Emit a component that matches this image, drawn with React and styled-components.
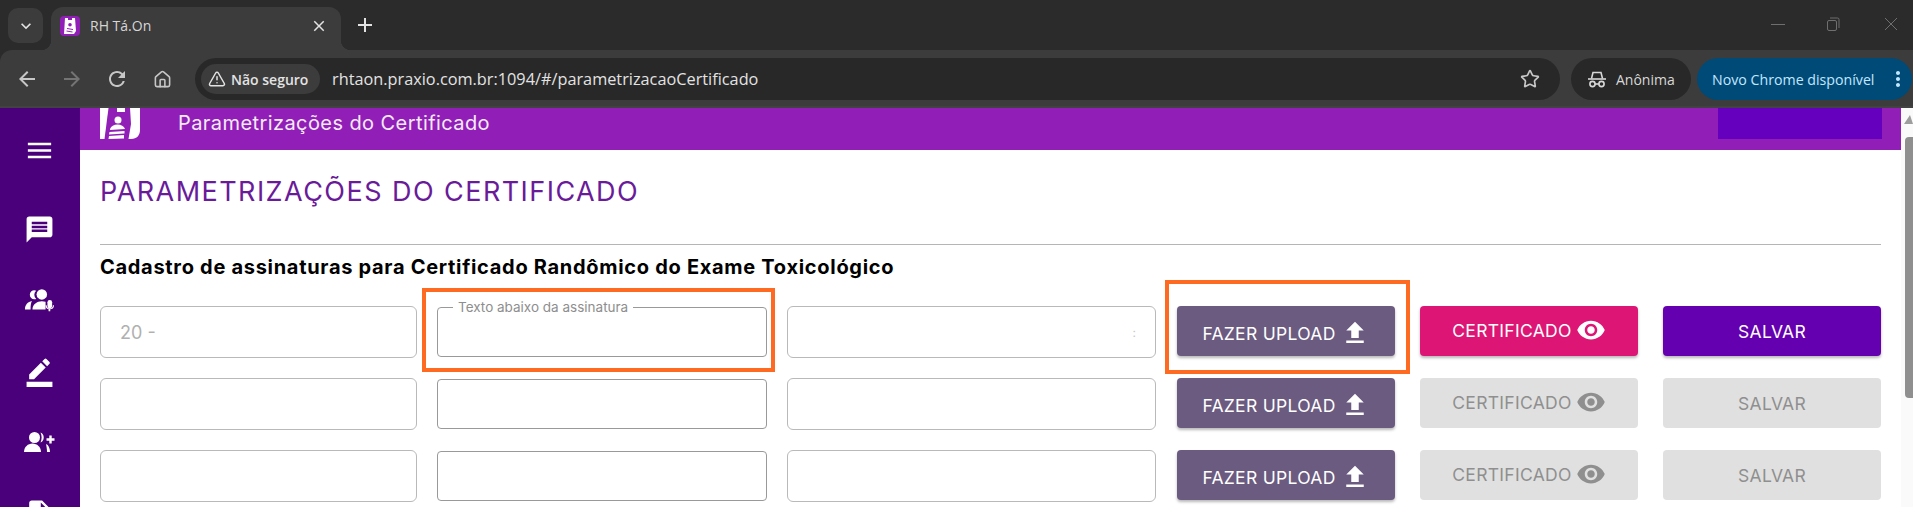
import React from "react";
import styled, { createGlobalStyle } from "styled-components";
import {
  MdMenu,
  MdMessage,
  MdBorderColor,
  MdInsertDriveFile,
  MdFileUpload,
  MdVisibility,
  MdArrowBack,
  MdArrowForward,
  MdRefresh,
  MdMoreVert,
  MdClose,
  MdAdd,
  MdKeyboardArrowDown,
} from "react-icons/md";
import { Home, Star, TriangleAlert } from "lucide-react";

const GlobalStyle = createGlobalStyle`
  html, body {
    margin: 0;
    padding: 0;
    height: 100%;
    overflow: hidden;
    background: #2b2b2b;
  }
  * { box-sizing: border-box; }
`;

const Page = styled.div`
  width: 1913px;
  height: 507px;
  overflow: hidden;
  display: flex;
  flex-direction: column;
  font-family: Inter, "Liberation Sans", sans-serif;
`;

/* browser chrome */
const TabStrip = styled.div`
  height: 50px;
  flex: none;
  background: #2b2b2b;
  display: flex;
  align-items: flex-start;
  padding: 8px 0 0 8px;
`;
const TabMenu = styled.div`
  width: 35px;
  height: 35px;
  border-radius: 10px;
  background: #3c3c3c;
  color: #e3e3e3;
  display: flex;
  align-items: center;
  justify-content: center;
  font-size: 20px;
`;
const Tab = styled.div`
  position: relative;
  width: 290px;
  height: 43px;
  margin: -1px 0 0 8px;
  background: #3c3c3c;
  border-radius: 12px 12px 0 0;
  display: flex;
  align-items: center;
  padding: 0 13px 6px 9px;
  color: #e3e3e3;
  &::before,
  &::after {
    content: "";
    position: absolute;
    bottom: 0;
    width: 10px;
    height: 10px;
  }
  &::before {
    left: -10px;
    background: radial-gradient(circle at 0 0, #2b2b2b 10px, #3c3c3c 10.5px);
  }
  &::after {
    right: -10px;
    background: radial-gradient(circle at 100% 0, #2b2b2b 10px, #3c3c3c 10.5px);
  }
`;
const TabTitle = styled.span`
  flex: 1;
  margin-left: 10px;
  font-family: "Open Sans", sans-serif;
  font-size: 14px;
  color: #d6d6d6;
`;
const NewTab = styled.div`
  margin: 5px 0 0 12px;
  color: #e3e3e3;
  font-size: 24px;
  display: flex;
`;
const WindowControls = styled.div`
  margin-left: auto;
  display: flex;
  align-items: center;
  gap: 39px;
  padding: 8px 14px 0 0;
  color: #6f6f6f;
  & > :last-child {
    margin-left: 3px;
  }
`;
const Toolbar = styled.div`
  height: 58px;
  flex: none;
  background: #3c3c3c;
  border-radius: 12px 0 0 0;
  border-bottom: 2px solid #424242;
  display: flex;
  align-items: center;
  padding: 2px 1px 0 9px;
`;
const NavButton = styled.div`
  width: 36px;
  height: 36px;
  margin-right: 9px;
  display: flex;
  align-items: center;
  justify-content: center;
  font-size: 24px;
  color: ${(p) => (p.$off ? "#747474" : "#c7c7c7")};
`;
const AddressBar = styled.div`
  width: 1365px;
  height: 42px;
  margin-left: 6px;
  border-radius: 21px;
  background: #282828;
  display: flex;
  align-items: center;
  padding: 0 20px 0 6px;
`;
const SecurityChip = styled.div`
  width: 119px;
  height: 30px;
  flex: none;
  border-radius: 15px;
  background: #3c3c3c;
  color: #e3e3e3;
  display: flex;
  align-items: center;
  gap: 5px;
  padding-left: 7px;
  font-family: "Open Sans", sans-serif;
  font-size: 14px;
  font-weight: 600;
  white-space: nowrap;
`;
const Url = styled.div`
  flex: 1;
  margin-left: 12px;
  font-family: "Open Sans", sans-serif;
  font-size: 16.3px;
  color: #e3e3e3;
`;
const ProfileChip = styled.div`
  width: 120px;
  height: 42px;
  margin-left: 11px;
  flex: none;
  border-radius: 21px;
  background: #282828;
  color: #d8d8d8;
  display: flex;
  align-items: center;
  gap: 9px;
  padding-left: 16px;
  font-family: "Open Sans", sans-serif;
  font-size: 14px;
`;
const UpdateChip = styled.div`
  width: 215px;
  height: 42px;
  margin-left: 6px;
  flex: none;
  border-radius: 21px;
  background: #004a77;
  color: #c2e7ff;
  display: flex;
  align-items: center;
  justify-content: space-between;
  padding: 0 2px 0 15px;
  font-family: "Open Sans", sans-serif;
  font-size: 14.2px;
`;

/* app */
const Body = styled.div`
  flex: 1;
  min-height: 0;
  display: flex;
  background: #fff;
`;
const Sidebar = styled.nav`
  width: 80px;
  flex: none;
  background: #4a007a;
  color: #fff;
  display: flex;
  flex-direction: column;
  align-items: center;
  padding: 22px 2px 0 0;
  gap: 31px;
  overflow: hidden;
`;
const SideIcon = styled.div`
  width: 32px;
  height: 40px;
  flex: none;
  display: flex;
  align-items: center;
  justify-content: center;
  font-size: 31px;
  &:first-child {
    margin-bottom: 8px;
  }
`;
const Main = styled.main`
  flex: 1;
  min-width: 0;
  overflow: hidden;
`;
const Header = styled.header`
  height: 42px;
  background: #911fb7;
  color: #fff;
  display: flex;
  padding-left: 20px;
`;
const HeaderLogo = styled.svg`
  width: 40px;
  height: 31px;
  flex: none;
`;
const HeaderTitle = styled.div`
  margin-left: 38px;
  font-size: 20px;
  line-height: 30px;
  letter-spacing: 0.42px;
  color: #f4eaf8;
`;
const HeaderAction = styled.div`
  width: 164px;
  height: 32px;
  margin: -1px 19px 0 auto;
  background: #6500be;
`;
const Content = styled.section`
  position: relative;
  padding: 0 20px;
`;
const PageTitle = styled.h1`
  margin: 0;
  padding-top: 26px;
  height: 95px;
  border-bottom: 1px solid #b5b5b5;
  font-size: 27px;
  line-height: 32px;
  font-weight: 400;
  letter-spacing: 1.45px;
  color: #6a1b9a;
`;
const SectionTitle = styled.h2`
  margin: 0;
  padding-top: 10px;
  height: 61px;
  font-size: 20px;
  line-height: 24px;
  font-weight: 700;
  letter-spacing: 0.7px;
  color: #000;
`;
const Rows = styled.div`
  display: flex;
  flex-direction: column;
  gap: 20px;
`;
const Row = styled.div`
  display: flex;
  gap: 21px;
  height: 52px;
`;
const Inputs = styled.div`
  display: grid;
  grid-template-columns: 317px 330px 369px;
  column-gap: 20px;
`;
const Actions = styled.div`
  display: grid;
  grid-template-columns: repeat(3, 218px);
  column-gap: 25px;
`;
const Field = styled.div`
  position: relative;
  height: ${(p) => (p.$inner ? "50px" : "52px")};
  margin-top: ${(p) => (p.$inner ? "1px" : "0")};
  border: 1px solid ${(p) => (p.$inner ? "#999" : "#b9b9b9")};
  border-radius: ${(p) => (p.$inner ? "4px" : "6px")};
  background: #fff;
  display: flex;
  align-items: center;
  justify-content: ${(p) => (p.$end ? "flex-end" : "flex-start")};
  padding: 0 19px;
  font-size: 18px;
  color: #b0b0b0;
`;
const FieldLabel = styled.span`
  position: absolute;
  top: -8px;
  left: 15px;
  padding: 0 5px;
  background: #fff;
  font-size: 13.5px;
  line-height: 15px;
  color: #8e8e8e;
`;
const FieldMark = styled.span`
  font-size: 12px;
  color: #c8c8c8;
`;
const Button = styled.div`
  height: 50px;
  border-radius: 4px;
  background: ${(p) => p.$bg};
  color: ${(p) => p.$fg};
  box-shadow: ${(p) => (p.$flat ? "none" : "0 2px 3px rgba(0, 0, 0, 0.28)")};
  display: flex;
  align-items: center;
  justify-content: center;
  gap: ${(p) => p.$gap || 6}px;
  padding-top: ${(p) => p.$down || 0}px;
  padding-bottom: ${(p) => p.$up || 0}px;
  font-size: 17.5px;
  letter-spacing: 0.3px;
  svg {
    flex: none;
  }
`;
const Annotation = styled.div`
  position: absolute;
  border: 4px solid #ff6a22;
  pointer-events: none;
  left: ${(p) => p.$left}px;
  top: ${(p) => p.$top}px;
  width: ${(p) => p.$width}px;
  height: ${(p) => p.$height}px;
`;
const Scrollbar = styled.div`
  width: 12px;
  flex: none;
  background: #fafafa;
  display: flex;
  flex-direction: column;
  align-items: flex-end;
  padding-top: 7px;
`;
const ScrollArrow = styled.div`
  width: 0;
  height: 0;
  border-left: 6px solid transparent;
  border-right: 3px solid transparent;
  border-bottom: 9px solid #9d9d9d;
`;
const ScrollThumb = styled.div`
  width: 8px;
  height: 261px;
  margin-top: 13px;
  background: #8f8f8f;
  border-radius: 4px 0 0 4px;
`;

function HeaderBadge() {
  return (
    <HeaderLogo viewBox="0 0 40 31">
      <path fill="#fff" d="M0 0h8.500L4.500 31H0z" />
      <path fill="#fff" d="M30 0h10v22c0 5-3 9-9 9h-2.500L31 16z" />
      <path fill="#fff" d="M17 0h8v4h-8z" />
      <circle cx="18" cy="12" r="3.500" fill="#fff" />
      <path fill="#fff" d="M10 21c1-3 4-4.500 7.500-4.500S24 18 25 21l-15 1z" />
      <path fill="#fff" d="M9.500 24l15-1v2.500l-15.500 1zM9 28l15-1v3.500l-15.500.5z" />
    </HeaderLogo>
  );
}

function MicGroupIcon() {
  return (
    <svg width="30" height="30" viewBox="0 0 32 32" fill="currentColor">
      <circle cx="19" cy="10" r="5.600" />
      <path d="M13 6.200a5.600 5.600 0 0 0 0 8.600 5.500 5.500 0 0 1-2 .4 4.800 4.800 0 0 1 0-9.600c.7 0 1.400.2 2 .6z" />
      <path d="M9 26c0-5.500 5-8.800 10-8.800 1.400 0 2.800.2 4 .7V26H9z" />
      <path d="M7 26H1c0-5 3-8 7.500-9-1.200 1.800-1.500 5-1.500 9z" />
      <rect x="25" y="16" width="5" height="9" rx="2.500" />
      <path d="M23 21.500h1.200a3.300 3.300 0 0 0 6.600 0H32a4.500 4.500 0 0 1-4 4.400V28h-1.800v-2.100a4.500 4.500 0 0 1-3.200-4.400z" />
    </svg>
  );
}

function GroupPlusIcon() {
  return (
    <svg width="31" height="22" viewBox="0 0 31 22" fill="currentColor">
      <circle cx="10.500" cy="6.500" r="5.500" />
      <path d="M0 21c0-5 4-8.500 8.500-8.500S17 16 17 21z" />
      <path d="M16.500 1.500a5.500 5.500 0 0 1 0 10c1.500-3 1.500-7 0-10z" />
      <path d="M22 13c2.500 1 4 4 4 8h-3c0-3-.5-6-1-8z" />
      <path d="M25.300 4.500h2.400v2.800h2.800v2.400h-2.800v2.800h-2.400V9.700h-2.800V7.300h2.800z" />
    </svg>
  );
}

function IncognitoIcon() {
  return (
    <svg width="20" height="20" viewBox="0 0 20 20" fill="none" stroke="currentColor" strokeWidth="1.600">
      <path d="M1 10h18" />
      <path d="M4.500 9.500 6 3.500h8l1.500 6" />
      <circle cx="5.500" cy="15" r="2.600" />
      <circle cx="14.500" cy="15" r="2.600" />
      <path d="M8 15h4" />
    </svg>
  );
}

function Favicon() {
  return (
    <svg width="20" height="20" viewBox="0 0 20 20">
      <rect width="20" height="20" rx="4" fill="#911fb7" />
      <path
        fill="#fff"
        d="M5 2h3v2h4V2h3l1 13-2 3H4l1-16zm5 5a1.800 1.800 0 1 0 0 3.600A1.800 1.800 0 0 0 10 7zm-3 6 6 1v-1l-6-1zm-.5 2.500 6 1v-1l-6-1z"
      />
    </svg>
  );
}

const rows = [
  { first: "20 -", label: "Texto abaixo da assinatura", mark: ":", active: true },
  { first: "", label: "", mark: "", active: false },
  { first: "", label: "", mark: "", active: false },
];

function SignatureRow({ first, label, mark, active }) {
  return (
    <Row>
      <Inputs>
        <Field>{first}</Field>
        <Field $inner>{label && <FieldLabel>{label}</FieldLabel>}</Field>
        <Field $end>{mark && <FieldMark>{mark}</FieldMark>}</Field>
      </Inputs>
      <Actions>
        <Button $bg="#6b5b80" $fg="#fff" $gap={4} $down={4}>
          FAZER UPLOAD
          <MdFileUpload size={30} />
        </Button>
        <Button
          $bg={active ? "#dd1676" : "#e0e0e0"}
          $fg={active ? "#fff" : "#8f8f8f"}
          $flat={!active}
          $gap={4}
          $up={2}
        >
          CERTIFICADO
          <MdVisibility size={30} />
        </Button>
        <Button
          $bg={active ? "#6500b0" : "#e0e0e0"}
          $fg={active ? "#fff" : "#8f8f8f"}
          $flat={!active}
        >
          SALVAR
        </Button>
      </Actions>
    </Row>
  );
}

export default function App() {
  return (
    <Page>
      <GlobalStyle />
      <TabStrip>
        <TabMenu>
          <MdKeyboardArrowDown />
        </TabMenu>
        <Tab>
          <Favicon />
          <TabTitle>RH Tá.On</TabTitle>
          <MdClose size={18} />
        </Tab>
        <NewTab>
          <MdAdd />
        </NewTab>
        <WindowControls>
          <svg width="16" height="16" viewBox="0 0 16 16" stroke="currentColor" fill="none">
            <path d="M1 8.500h14" />
          </svg>
          <svg width="16" height="16" viewBox="0 0 16 16" stroke="currentColor" fill="none">
            <rect x="2.500" y="4.500" width="9" height="10" rx="1.500" />
            <path d="M5 2h7.500a1.500 1.500 0 0 1 1.500 1.500V12" />
          </svg>
          <svg width="16" height="16" viewBox="0 0 16 16" stroke="currentColor" fill="none">
            <path d="M2 2l12 12M14 2 2 14" />
          </svg>
        </WindowControls>
      </TabStrip>
      <Toolbar>
        <NavButton>
          <MdArrowBack />
        </NavButton>
        <NavButton $off>
          <MdArrowForward />
        </NavButton>
        <NavButton>
          <MdRefresh />
        </NavButton>
        <NavButton>
          <Home size={19} />
        </NavButton>
        <AddressBar>
          <SecurityChip>
            <TriangleAlert size={18} />
            Não seguro
          </SecurityChip>
          <Url>rhtaon.praxio.com.br:1094/#/parametrizacaoCertificado</Url>
          <Star size={20} color="#c7c7c7" />
        </AddressBar>
        <ProfileChip>
          <IncognitoIcon />
          Anônima
        </ProfileChip>
        <UpdateChip>
          Novo Chrome disponível
          <MdMoreVert size={24} />
        </UpdateChip>
      </Toolbar>
      <Body>
        <Sidebar>
          <SideIcon>
            <MdMenu />
          </SideIcon>
          <SideIcon>
            <MdMessage />
          </SideIcon>
          <SideIcon>
            <MicGroupIcon />
          </SideIcon>
          <SideIcon>
            <MdBorderColor />
          </SideIcon>
          <SideIcon>
            <GroupPlusIcon />
          </SideIcon>
          <SideIcon>
            <MdInsertDriveFile />
          </SideIcon>
        </Sidebar>
        <Main>
          <Header>
            <HeaderBadge />
            <HeaderTitle>Parametrizações do Certificado</HeaderTitle>
            <HeaderAction />
          </Header>
          <Content>
            <PageTitle>PARAMETRIZAÇÕES DO CERTIFICADO</PageTitle>
            <SectionTitle>Cadastro de assinaturas para Certificado Randômico do Exame Toxicológico</SectionTitle>
            <Rows>
              {rows.map((row, i) => (
                <SignatureRow key={i} {...row} />
              ))}
            </Rows>
            <Annotation $left={342} $top={138} $width={353} $height={84} />
            <Annotation $left={1085} $top={130} $width={245} $height={94} />
          </Content>
        </Main>
        <Scrollbar>
          <ScrollArrow />
          <ScrollThumb />
        </Scrollbar>
      </Body>
    </Page>
  );
}
